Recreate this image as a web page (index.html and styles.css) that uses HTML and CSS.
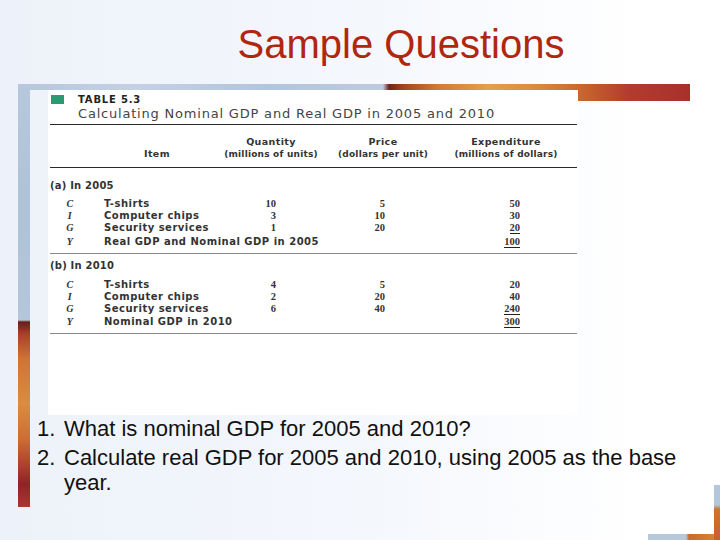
FILE: index.html
```html
<!DOCTYPE html>
<html>
<head>
<meta charset="utf-8">
<link rel="stylesheet" href="styles.css">
</head>
<body>
<div class="slide">
  <h1 class="title">Sample Questions</h1>
  <div class="stage">
    <div class="band"></div>
    <div class="bar"></div>
    <div class="panel">
      <div class="cap">
        <span class="chip"></span>
        <span class="cap-label">TABLE 5.3</span>
      </div>
      <div class="cap-title">Calculating Nominal GDP and Real GDP in 2005 and 2010</div>
      <div class="rule rule-dark"></div>
      <div class="head row">
        <span class="c-let"></span>
        <span class="c-item h-item">Item</span>
        <span class="c-q h">Quantity<br><em>(millions of units)</em></span>
        <span class="c-p h">Price<br><em>(dollars per unit)</em></span>
        <span class="c-e h">Expenditure<br><em>(millions of dollars)</em></span>
      </div>
      <div class="rule rule-dark"></div>
      <div class="section sec-a">
        <div class="sec-label">(a) In 2005</div>
        <div class="row data"><span class="c-let">C</span><span class="c-item">T-shirts</span><span class="c-q n">10</span><span class="c-p n">5</span><span class="c-e n">50</span></div>
        <div class="row data"><span class="c-let">I</span><span class="c-item">Computer chips</span><span class="c-q n">3</span><span class="c-p n">10</span><span class="c-e n">30</span></div>
        <div class="row data"><span class="c-let">G</span><span class="c-item">Security services</span><span class="c-q n">1</span><span class="c-p n">20</span><span class="c-e n"><u>20</u></span></div>
        <div class="row data total"><span class="c-let">Y</span><span class="c-item">Real GDP and Nominal GDP in 2005</span><span class="c-q n"></span><span class="c-p n"></span><span class="c-e n"><u>100</u></span></div>
      </div>
      <div class="rule"></div>
      <div class="section sec-b">
        <div class="sec-label">(b) In 2010</div>
        <div class="row data"><span class="c-let">C</span><span class="c-item">T-shirts</span><span class="c-q n">4</span><span class="c-p n">5</span><span class="c-e n">20</span></div>
        <div class="row data"><span class="c-let">I</span><span class="c-item">Computer chips</span><span class="c-q n">2</span><span class="c-p n">20</span><span class="c-e n">40</span></div>
        <div class="row data"><span class="c-let">G</span><span class="c-item">Security services</span><span class="c-q n">6</span><span class="c-p n">40</span><span class="c-e n"><u>240</u></span></div>
        <div class="row data total2"><span class="c-let">Y</span><span class="c-item">Nominal GDP in 2010</span><span class="c-q n"></span><span class="c-p n"></span><span class="c-e n"><u>300</u></span></div>
      </div>
      <div class="rule"></div>
    </div>
    <div class="band-end"></div>
    <ol class="questions">
      <li><span class="num">1.</span><span class="q">What is nominal GDP for 2005 and 2010?</span></li>
      <li><span class="num">2.</span><span class="q">Calculate real GDP for 2005 and 2010, using 2005 as the base year.</span></li>
    </ol>
  </div>
  <div class="corner">
    <span class="corner-v"></span>
    <span class="corner-h"></span>
  </div>
</div>
</body>
</html>
```

FILE: styles.css
```css
html, body {
  margin: 0;
  padding: 0;
}

.slide {
  position: relative;
  width: 720px;
  height: 540px;
  overflow: hidden;
  background: linear-gradient(to right, #edf2fa 0%, #f4f7fc 50%, #ffffff 90%);
  font-family: "Liberation Sans", Arial, sans-serif;
}

.title {
  margin: 0;
  height: 84px;
  padding: 4px 0 0 82px;
  box-sizing: border-box;
  display: flex;
  align-items: center;
  justify-content: center;
  font-family: "Liberation Sans", Arial, sans-serif;
  font-weight: normal;
  font-size: 40px;
  color: #b0260f;
}

.stage {
  margin-left: 18px;
  display: grid;
  grid-template-columns: 12px 18px 530px 112px;
  grid-template-rows: 6px 11px 314px 92px;
}

.band,
.band-end {
  background: linear-gradient(to right,
    #b6c7da 0px, #c3d1e2 120px, #b3c5d9 250px, #bccbdc 365px,
    #6e231c 371px, #a2441f 385px, #d27a34 420px, #e2a04c 470px,
    #d98a3c 520px, #c5612d 570px, #b33c2e 610px, #a8302c 672px);
  background-size: 672px 100%;
}

.band {
  grid-row: 1;
  grid-column: 1 / 5;
}

.band-end {
  grid-row: 2;
  grid-column: 4;
  background-position: -560px 0;
}

.bar {
  grid-row: 1 / 5;
  grid-column: 1;
  background: linear-gradient(to bottom,
    #b7c8dc 0px, #aec2d8 120px, #b4c6da 236px,
    #6a1c1a 238px, #a8402a 250px, #cf7436 275px, #d98c42 320px,
    #cc6e34 355px, #a93a2c 385px, #8e2426 400px, #a8382e 423px);
}

.panel {
  grid-row: 2 / 4;
  grid-column: 3;
  background: #ffffff;
  padding: 0 1px 0 2px;
  color: #333;
  font-family: "DejaVu Sans", "Open Sans", sans-serif;
}

.cap {
  display: flex;
  align-items: center;
  height: 14px;
  margin-top: 2px;
  gap: 14px;
  padding-left: 1px;
}

.chip {
  width: 13px;
  height: 9px;
  background: #2a9a72;
}

.cap-label {
  font-weight: 700;
  font-size: 10px;
  letter-spacing: 0.8px;
  color: #222;
}

.cap-title {
  padding-left: 28px;
  height: 18px;
  line-height: 16px;
  font-size: 13px;
  letter-spacing: 0.8px;
  color: #444;
}

.rule {
  height: 1px;
  background: #8a8a8a;
}

.rule-dark {
  background: #2a2a2a;
}

.row {
  display: flex;
}

.c-let {
  width: 40px;
  text-align: center;
  font-style: italic;
  font-family: "Liberation Serif", serif;
  font-weight: 700;
}

.c-item {
  width: 134px;
  padding-left: 14px;
  box-sizing: border-box;
  white-space: nowrap;
}

.c-q {
  width: 94px;
}

.c-p {
  width: 130px;
}

.c-e {
  width: 129px;
}

.head {
  height: 42px;
  padding-top: 11px;
  box-sizing: border-box;
  font-size: 9.5px;
  font-weight: 700;
  line-height: 12px;
  letter-spacing: 0.4px;
}

.head .h {
  text-align: center;
}

.head .c-e {
  padding-right: 13px;
  box-sizing: border-box;
}

.head em {
  font-style: normal;
  font-weight: 700;
  font-size: 9px;
  letter-spacing: 0.2px;
}

.h-item {
  padding-left: 0;
  padding-top: 12px;
  text-align: center;
}

.section {
  padding-bottom: 5px;
}

.sec-a {
  padding-top: 11px;
}

.sec-b {
  padding-top: 5px;
}

.sec-label {
  height: 14px;
  line-height: 14px;
  font-size: 10px;
  font-weight: 700;
  letter-spacing: 0.2px;
  margin-bottom: 5px;
}

.sec-b .sec-label {
  margin-bottom: 6px;
}

.data {
  height: 12px;
  line-height: 12px;
  font-size: 10px;
  font-weight: 700;
  letter-spacing: 0.5px;
}

.data .c-let {
  font-size: 10px;
}

.n {
  text-align: right;
  box-sizing: border-box;
  font-family: "Liberation Serif", serif;
  font-weight: 700;
  font-size: 10.5px;
  letter-spacing: 0;
  color: #333;
}

.c-q.n { padding-right: 42px; }
.c-p.n { padding-right: 63px; }
.c-e.n { padding-right: 57px; }

.n u {
  text-decoration: none;
  border-bottom: 1px solid #222;
  line-height: 11px;
  display: inline-block;
}

.total {
  margin-top: 2px;
}

.total2 {
  margin-top: 1px;
}

.questions {
  grid-row: 4;
  grid-column: 2 / 5;
  margin: 0;
  padding: 0 0 0 7px;
  list-style: none;
  font-family: "Liberation Sans", Arial, sans-serif;
  font-size: 22px;
  line-height: 25px;
  color: #111;
}

.questions li {
  display: flex;
  margin-top: 1px;
}

.questions li + li {
  margin-top: 4px;
}

.num {
  width: 27px;
  flex: none;
}

.q {
  width: 625px;
}

.corner {
  position: absolute;
  right: 0;
  bottom: 0;
  width: 80px;
  height: 60px;
  background: linear-gradient(to bottom, rgba(255,255,255,0) 0px, #ffffff 8px);
}

.corner-v {
  position: absolute;
  right: 0;
  top: 5px;
  width: 6px;
  height: 55px;
  background: linear-gradient(to bottom, #b2c6dc 0px, #b2c6dc 20px, #d0742e 24px, #c8602a 55px);
}

.corner-h {
  position: absolute;
  left: 8px;
  bottom: 0;
  width: 66px;
  height: 6px;
  background: linear-gradient(to right, #b6c8dc 0px, #b6c8dc 38px, #c96a2c 41px, #d58236 66px);
}
```
